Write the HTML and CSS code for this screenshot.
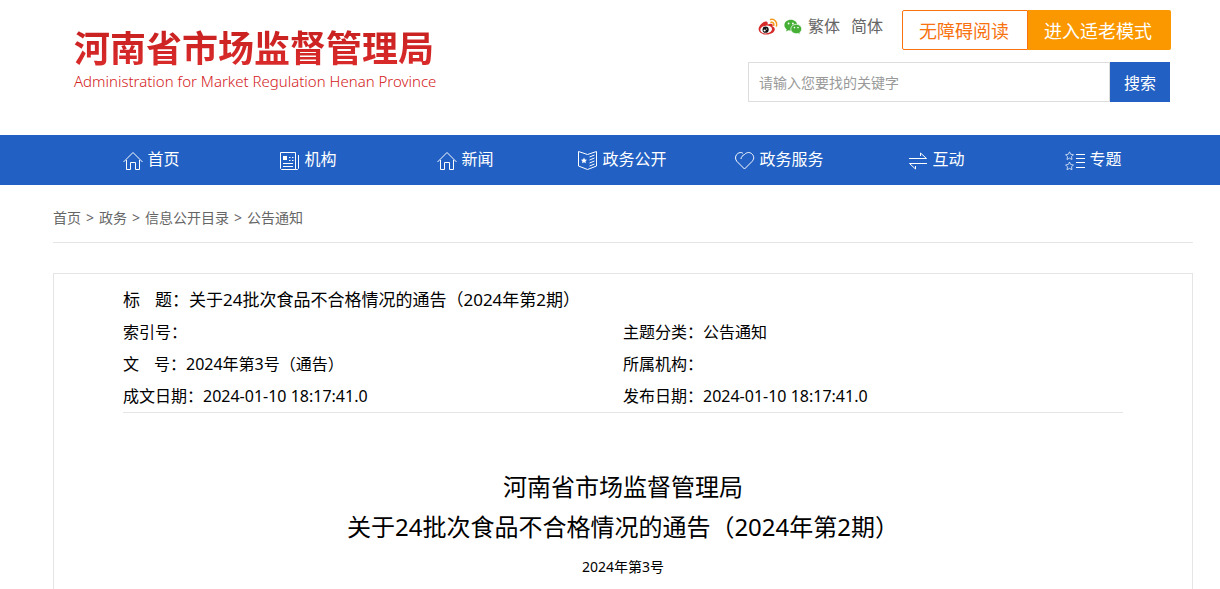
FILE: index.html
```html
<!DOCTYPE html>
<html lang="zh-CN">
<head>
    <meta charset="UTF-8">
    <meta name="viewport" content="width=device-width, initial-scale=1.0">
    <title>关于24批次食品不合格情况的通告（2024年第2期）</title>
    <link rel="stylesheet" href="styles.css">
</head>
<body>
    <header class="header">
        <a class="logo" href="#">
            <span class="logo-cn">河南省市场监督管理局</span>
            <span class="logo-en">Administration for Market Regulation Henan Province</span>
        </a>
        <div class="tools">
            <div class="tools-top">
                <div class="links">
                    <a href="#" aria-label="微博">
                        <svg width="20" height="18" viewBox="0 0 20 18">
                            <path d="M7.5 3.6C5 3.8.6 8 .6 11.3c0 3.200 3.700 5.200 7.800 5.200 4.700 0 8.400-2.500 8.400-5.300 0-1.700-1.200-2.400-2.300-2.800.5-1.600.2-2.600-1.200-2.700-1.200-.1-2.500.3-3.700.8C10 4.600 9.500 3.500 7.500 3.600z" fill="#d52b2a"/>
                            <ellipse cx="8.200" cy="11.500" rx="5.900" ry="3.900" fill="#fff" transform="rotate(-8 8.200 11.500)"/>
                            <circle cx="7.600" cy="11.700" r="3.100" fill="#111"/>
                            <circle cx="6.600" cy="12.500" r="1.100" fill="#fff"/>
                            <circle cx="8.600" cy="11" r=".6" fill="#fff"/>
                            <path d="M12.600 1.500c3.800-.8 7 2.400 5.800 6.500M13 4.300c2-.4 3.300 1 2.700 3" fill="none" stroke="#f39a1c" stroke-width="1.500" stroke-linecap="round"/>
                        </svg>
                    </a>
                    <a href="#" aria-label="微信">
                        <svg width="18" height="16" viewBox="0 0 18 16">
                            <path d="M6.800.8C3.200.8.4 3.200.4 6.200c0 1.700.9 3.200 2.300 4.200L2.100 12.400l2.300-1.200c.7.2 1.500.4 2.400.4 3.600 0 6.400-2.400 6.400-5.400S10.400.8 6.800.8z" fill="#45b035"/>
                            <path d="M12.300 5.300c-3.100 0-5.500 2-5.500 4.700s2.400 4.700 5.500 4.700c.7 0 1.400-.1 2-.3l1.900 1.100-.5-1.800c1.200-.9 2-2.200 2-3.700 0-2.700-2.400-4.700-5.400-4.700z" fill="#45b035" stroke="#fff" stroke-width=".7"/>
                            <circle cx="4.600" cy="4.500" r=".9" fill="#fff"/>
                            <circle cx="8.900" cy="4.500" r=".9" fill="#fff"/>
                            <circle cx="10.500" cy="8.600" r=".8" fill="#fff"/>
                            <circle cx="14" cy="8.600" r=".8" fill="#fff"/>
                        </svg>
                    </a>
                    <a class="lang" href="#">繁体</a>
                    <a class="lang" href="#">简体</a>
                </div>
                <div class="modes">
                    <button class="mode" type="button">无障碍阅读</button>
                    <button class="mode mode-old" type="button">进入适老模式</button>
                </div>
            </div>
            <form class="search">
                <input type="text" aria-label="关键字" placeholder="请输入您要找的关键字">
                <button type="button">搜索</button>
            </form>
        </div>
    </header>

    <nav class="nav">
        <div class="nav-list">
            <a href="#">
                <svg width="20" height="20" viewBox="0 0 20 20"><path d="M.5 11 10 1.500l9.500 9.500M3.500 9v9.500h4v-7h5v7h4V9"/></svg>
                首页
            </a>
            <a href="#">
                <svg width="20" height="20" viewBox="0 0 20 20"><path d="M.5 1.500h15v17H1.500l-1-1zM18.500 4v13.500l-1 1h-2M9 6.500h1.500M12 6.500h1.500M9 9.500h1.500M12 9.500h1.500M3 12.500h10M3 15.500h10"/><path class="fill" d="M3 5h4v4H3z"/></svg>
                机构
            </a>
            <a href="#">
                <svg width="20" height="20" viewBox="0 0 20 20"><path d="M.5 11 10 1.500l9.500 9.500M3.500 9v9.500h4v-7h5v7h4V9"/></svg>
                新闻
            </a>
            <a href="#">
                <svg width="20" height="20" viewBox="0 0 20 20"><path d="M.5.500v14.500l9 3.500 9-3.500V.500L9.500 3.500zM11.500 6l5-2M11.500 9l5-2M11.500 12l5-2M11.500 15l5-2"/><path class="fill" d="m6 6.500.9 1.900 2.100.3-1.500 1.500.4 2.100L6 11.300l-1.900 1 .4-2.100L3 8.700l2.100-.3z"/></svg>
                政务公开
            </a>
            <a href="#">
                <svg width="20" height="20" viewBox="0 0 20 20"><path d="M6 8c0-2 1.500-3.500 3.500-4.500C12 .8 15.500 1 17.500 3.500s1.300 5-.5 7L9.500 18 2 10.500C.2 8.500 0 5.500 1.700 3.500S6.500.8 8 2.500"/></svg>
                政务服务
            </a>
            <a href="#">
                <svg width="20" height="20" viewBox="0 0 20 20"><path d="M1 7.500h17.500l-6-5.500v3M19 12.500H1.500L7.500 18v-3"/></svg>
                互动
            </a>
            <a href="#">
                <svg width="20" height="20" viewBox="0 0 20 20"><path class="thin" d="m4.500.8 1.200 2.500 2.800.4-2 2 .5 2.800-2.500-1.300L2 8.500l.5-2.800-2-2 2.800-.4zM4.500 11l1.200 2.500 2.800.4-2 2 .5 2.800-2.500-1.300L2 18.700l.5-2.800-2-2 2.800-.4z"/><path d="M11 3.500h9M11 7.500h9M11 11.500h9M11 16.500h9"/></svg>
                专题
            </a>
        </div>
    </nav>

    <main class="main">
        <div class="crumbs">
            <a href="#">首页</a>
            <span>&gt;</span>
            <a href="#">政务</a>
            <span>&gt;</span>
            <a href="#">信息公开目录</a>
            <span>&gt;</span>
            <a href="#">公告通知</a>
        </div>

        <article class="article">
            <table class="info">
                <tr class="info-title">
                    <td colspan="2">标<span class="gap"></span>题：关于24批次食品不合格情况的通告（2024年第2期）</td>
                </tr>
                <tr>
                    <td>索引号：</td>
                    <td>主题分类：公告通知</td>
                </tr>
                <tr>
                    <td>文<span class="gap"></span>号：2024年第3号（通告）</td>
                    <td>所属机构：</td>
                </tr>
                <tr>
                    <td>成文日期：2024-01-10 18:17:41.0</td>
                    <td>发布日期：2024-01-10 18:17:41.0</td>
                </tr>
            </table>
            <h1>河南省市场监督管理局<br>关于24批次食品不合格情况的通告（2024年第2期）</h1>
            <p class="number">2024年第3号</p>
        </article>
    </main>
</body>
</html>
```
FILE: styles.css
```css
* {
    box-sizing: border-box;
}
body {
    display: flex;
    flex-direction: column;
    min-height: 100vh;
    margin: 0;
    font-family: "Noto Sans", "Noto Sans CJK SC", sans-serif;
    font-size: 16px;
    color: #000;
    background: #fff;
}
a {
    color: inherit;
    text-decoration: none;
}
button, input {
    font-family: inherit;
}
.header {
    display: flex;
    justify-content: space-between;
    height: 135px;
    padding: 10px 49px 0 74px;
}
.logo {
    display: flex;
    flex-direction: column;
    padding-top: 12px;
    color: #d42022;
}
.logo-cn {
    font-family: "Noto Sans CJK SC", sans-serif;
    font-size: 36px;
    font-weight: 700;
    line-height: 48px;
    background: linear-gradient(#c41e1e, #dc2c2c);
    -webkit-background-clip: text;
    background-clip: text;
    color: transparent;
}
.logo-en {
    font-size: 15px;
    font-weight: 300;
    line-height: 22px;
}
.tools {
    width: 423px;
}
.tools-top {
    display: flex;
    justify-content: space-between;
    padding-left: 10px;
}
.links {
    display: flex;
    align-items: center;
    gap: 6px;
    height: 33px;
    color: #666;
}
.links svg {
    display: block;
}
.lang {
    line-height: 20px;
    padding-bottom: 1px;
}
.lang + .lang {
    margin-left: 5px;
}
.modes {
    display: flex;
}
.mode {
    height: 40px;
    padding: 0 18px 0 16px;
    border: 1px solid #f97210;
    border-radius: 2px 0 0 2px;
    background: #fff;
    color: #f97210;
    font-size: 18px;
    cursor: pointer;
}
.mode-old {
    border-color: #fb9800;
    border-left: 0;
    border-radius: 0 2px 2px 0;
    background: #fb9800;
    color: #fff;
}
.search {
    display: flex;
    height: 40px;
    margin: 12px 1px 0 0;
}
.search input {
    flex: 1;
    min-width: 0;
    padding: 0 10px;
    border: 1px solid #ddd;
    font-size: 14px;
}
.search input::placeholder {
    color: #999;
}
.search button {
    width: 60px;
    padding: 0;
    border: 0;
    background: #2261c3;
    color: #fff;
    font-size: 16px;
    cursor: pointer;
}
.nav {
    padding: 0 48px 0 73px;
    background: #2261c3;
    color: #fff;
}
.nav-list {
    display: flex;
}
.nav-list a {
    flex: 1;
    display: flex;
    justify-content: center;
    gap: 4px;
    height: 50px;
    line-height: 48px;
}
.nav-list svg {
    margin-top: 16px;
    fill: none;
    stroke: #fff;
    stroke-width: 1;
}
.nav-list .fill {
    fill: #fff;
    stroke: none;
}
.nav-list .thin {
    stroke-width: .7;
}
.main {
    flex: 1;
    display: flex;
    flex-direction: column;
    padding: 0 27px 0 53px;
}
.crumbs {
    display: flex;
    gap: 5px;
    height: 58px;
    margin-bottom: 30px;
    border-bottom: 1px solid #e5e5e5;
    font-size: 14px;
    line-height: 66px;
    color: #666;
}
.article {
    flex: 1;
    padding: 10px 69px 0;
    border: 1px solid #e5e5e5;
    border-bottom: 0;
    text-align: center;
}
.info {
    width: 100%;
    table-layout: fixed;
    border-collapse: collapse;
    border-bottom: 1px solid #e5e5e5;
    text-align: left;
}
.info td {
    height: 32px;
    padding: 0;
    line-height: 32px;
}
.info-title {
    font-size: 17px;
}
.gap {
    display: inline-block;
    width: 15px;
}
h1 {
    margin: 54px 0 0;
    font-size: 24px;
    font-weight: 400;
    line-height: 40px;
}
.number {
    margin: 5px 0 0;
    font-size: 14px;
    line-height: 30px;
}
```
